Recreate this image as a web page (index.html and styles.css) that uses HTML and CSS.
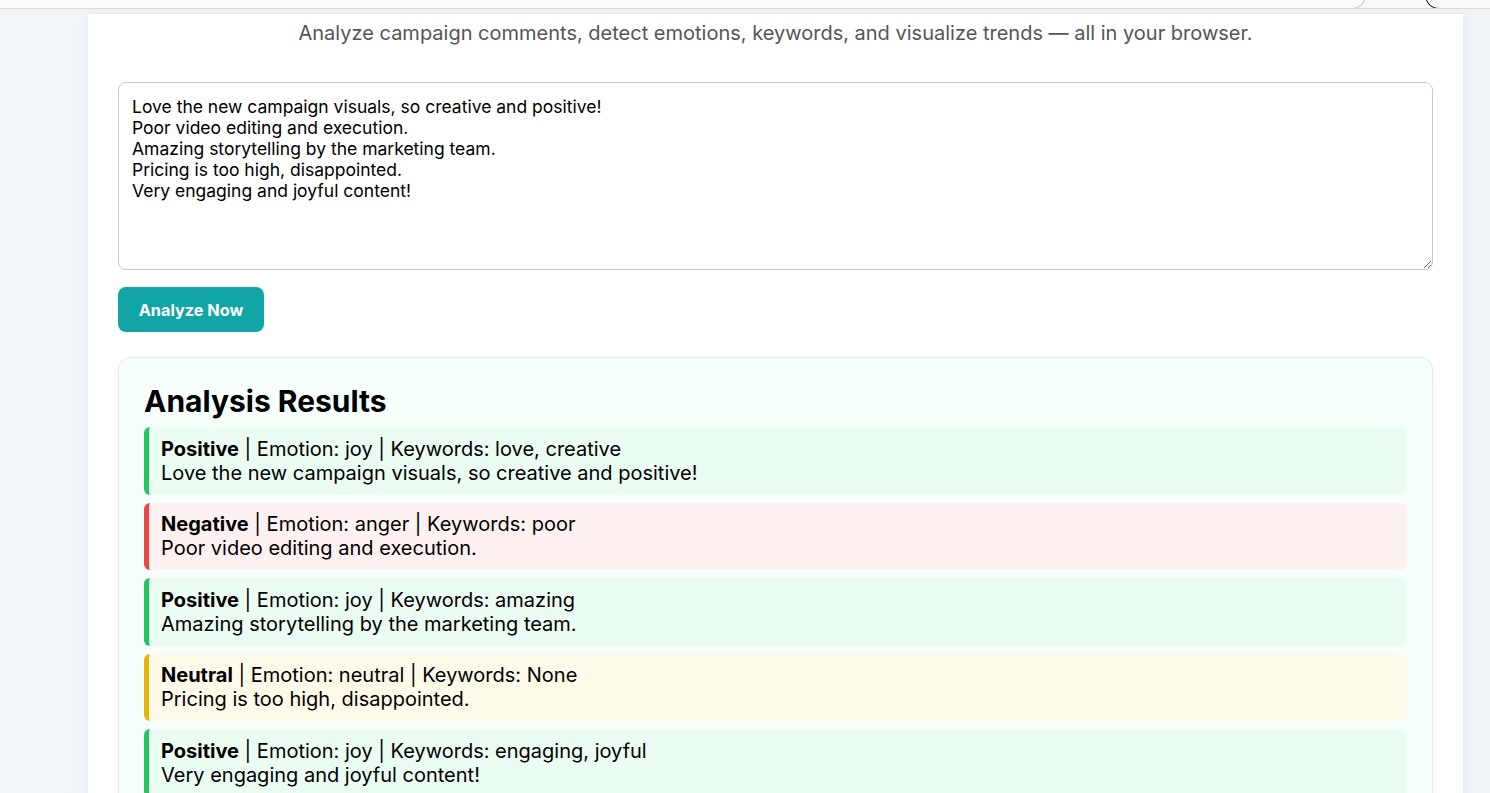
FILE: index.html
```html
<!DOCTYPE html>
<html lang="en">
<head>
<meta charset="utf-8">
<title>Campaign Sentiment Analyzer</title>
<link rel="stylesheet" href="styles.css">
</head>
<body>
<div class="chrome">
  <div class="chrome-bar">
    <div class="omnibox"></div>
    <div class="chrome-btn"></div>
  </div>
  <div class="chrome-edge"></div>
</div>
<div class="page">
  <main class="card">
    <p class="subtitle">Analyze campaign comments, detect emotions, keywords, and visualize trends — all in your browser.</p>
    <textarea class="input" spellcheck="false">Love the new campaign visuals, so creative and positive!
Poor video editing and execution.
Amazing storytelling by the marketing team.
Pricing is too high, disappointed.
Very engaging and joyful content!</textarea>
    <button class="btn">Analyze Now</button>
    <section class="results">
      <h2 class="results-title">Analysis Results</h2>
      <div class="item positive">
        <div><b>Positive</b> | Emotion: joy | Keywords: love, creative</div>
        <div>Love the new campaign visuals, so creative and positive!</div>
      </div>
      <div class="item negative">
        <div><b>Negative</b> | Emotion: anger | Keywords: poor</div>
        <div>Poor video editing and execution.</div>
      </div>
      <div class="item positive">
        <div><b>Positive</b> | Emotion: joy | Keywords: amazing</div>
        <div>Amazing storytelling by the marketing team.</div>
      </div>
      <div class="item neutral">
        <div><b>Neutral</b> | Emotion: neutral | Keywords: None</div>
        <div>Pricing is too high, disappointed.</div>
      </div>
      <div class="item positive">
        <div><b>Positive</b> | Emotion: joy | Keywords: engaging, joyful</div>
        <div>Very engaging and joyful content!</div>
      </div>
    </section>
  </main>
</div>
</body>
</html>
```
FILE: styles.css
```css
html, body {
  margin: 0;
  padding: 0;
  height: 100%;
  overflow: hidden;
}
body {
  font-family: Inter, "Noto Sans", Arial, sans-serif;
  background: linear-gradient(90deg, #f3f6fa 0%, #f1f5f9 100%);
  color: #111;
}
.chrome {
  background: #f9f9f9;
}
.chrome-bar {
  height: 8px;
  display: flex;
  justify-content: space-between;
  overflow: hidden;
}
.omnibox {
  width: 1365px;
  height: 8px;
  margin-top: -12px;
  padding-top: 12px;
  box-sizing: content-box;
  border: 1px solid #c9c9c9;
  border-top: none;
  border-left: none;
  border-radius: 0 0 14px 0;
  background: #fbfbfb;
}
.chrome-btn {
  width: 64px;
  height: 8px;
  margin-top: -12px;
  padding-top: 12px;
  box-sizing: content-box;
  border: 1.5px solid #222;
  border-top: none;
  border-right: none;
  border-radius: 0 0 0 14px;
}
.chrome-edge {
  height: 5px;
  border-top: 1px solid #dcdcdc;
  background: #f3f3f3;
}
.page {
  display: flex;
}
.card {
  margin-left: 88px;
  width: 1375px;
  box-sizing: border-box;
  background: #fff;
  padding: 7px 30px 0;
  box-shadow: 0 0 12px rgba(30, 50, 80, 0.06);
  min-height: 800px;
}
.subtitle {
  margin: 0 0 37px;
  text-align: center;
  color: #555;
  font-size: 20px;
  line-height: 24px;
}
.input {
  display: block;
  width: 100%;
  height: 188px;
  box-sizing: border-box;
  border: 1px solid #c8c8c8;
  border-radius: 8px;
  padding: 13px 13px;
  font-family: Inter, "Noto Sans", Arial, sans-serif;
  font-size: 17.5px;
  line-height: 21px;
  color: #000;
  resize: vertical;
  margin: 0;
}
.btn {
  display: block;
  margin-top: 17px;
  height: 45px;
  width: 146px;
  border: none;
  border-radius: 8px;
  background: #11a5a5;
  color: #fff;
  font-family: Inter, "Noto Sans", Arial, sans-serif;
  font-weight: 700;
  font-size: 16.3px;
}
.results {
  margin-top: 25px;
  background: #f7fffc;
  border: 1px solid #d1f7e4;
  border-radius: 12px;
  padding: 22px 25px 20px;
}
.results-title {
  margin: 0 0 5px;
  font-size: 30px;
  line-height: 42px;
  font-weight: 700;
  color: #000;
}
.item {
  border-left: 5px solid #22c55e;
  border-radius: 6px;
  padding: 9.75px 12px;
  margin-bottom: 8px;
  font-size: 20px;
  line-height: 24px;
  color: #000;
}
.item b { font-weight: 700; }
.positive { background: #ebfcf3; border-left-color: #22c55e; }
.negative { background: #fef1f1; border-left-color: #ef4444; }
.neutral { background: #fefae9; border-left-color: #eab308; }
```
